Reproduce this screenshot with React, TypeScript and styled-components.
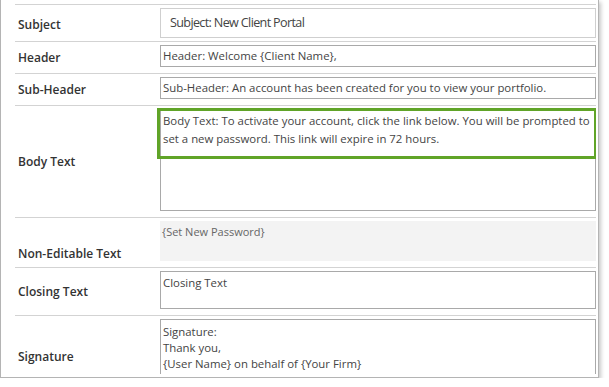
import React from 'react';
import styled, { createGlobalStyle } from 'styled-components';

// ----- global -----
const GlobalStyle = createGlobalStyle`
  html, body {
    margin: 0;
    padding: 0;
    background: #fff;
  }
  body {
    font-family: "Open Sans", "Liberation Sans", sans-serif;
  }
`;

// ----- frame -----
const Frame = styled.div`
  box-sizing: border-box;
  width: 599px;
  border: 1px solid #b4b4b4;
  border-top: none;
  padding: 0 2px 3px 14px;
  background: #fff;
  box-shadow: 2px 2px 4px rgba(0, 0, 0, 0.22);
`;

const Viewport = styled.div`
  box-sizing: border-box;
  height: 374px;
  padding-top: 4px;
  overflow: hidden;
`;

// ----- rows -----
const Row = styled.div<{ $tight?: boolean }>`
  display: grid;
  grid-template-columns: 145px 1fr;
  border-top: 1px solid #d3d3d3;
  padding: 3px 0 ${({ $tight }) => ($tight ? 3 : 6)}px;
`;

const Label = styled.div<{ $bottom?: boolean }>`
  align-self: ${({ $bottom }) => ($bottom ? 'end' : 'center')};
  padding: ${({ $bottom }) => ($bottom ? 0 : 4)}px 0 0 3px;
  font-size: 12px;
  font-weight: 600;
  line-height: ${({ $bottom }) => ($bottom ? 14 : 18)}px;
  color: #333;
`;

const Field = styled.div`
  position: relative;
`;

const Box = styled.div<{
  $height: number;
  $size?: number;
  $lineHeight?: number;
  $padTop?: number;
  $padLeft?: number;
  $light?: boolean;
}>`
  box-sizing: border-box;
  height: ${({ $height }) => $height}px;
  border: 1px solid ${({ $light }) => ($light ? '#cfcfcf' : '#a9a9a9')};
  padding: ${({ $padTop = 0 }) => $padTop}px 4px 0 ${({ $padLeft = 2 }) => $padLeft}px;
  font-size: ${({ $size = 11.4 }) => $size}px;
  line-height: ${({ $lineHeight = 16 }) => $lineHeight}px;
  color: #444;
  white-space: pre-line;
  overflow: hidden;
`;

const SubjectBox = styled(Box)`
  letter-spacing: -0.65px;
`;

const ReadOnly = styled.div`
  box-sizing: border-box;
  height: 40px;
  padding: 3px 2px 0;
  background: #f3f3f3;
  font-size: 11px;
  line-height: 16px;
  color: #666;
`;

// green callout drawn over the body field
const Highlight = styled.div`
  position: absolute;
  top: -1px;
  left: -3px;
  right: -1px;
  height: 51px;
  box-sizing: border-box;
  border: 3px solid #60a428;
  pointer-events: none;
`;

const App: React.FC = () => {
  return (
    <>
      <GlobalStyle />
      <Frame>
        <Viewport>
          <Row $tight>
            <Label>Subject</Label>
            <Field>
              <SubjectBox $height={30} $size={12.6} $lineHeight={28} $padLeft={9} $light>
                Subject: New Client Portal
              </SubjectBox>
            </Field>
          </Row>

          <Row>
            <Label>Header</Label>
            <Field>
              <Box $height={22} $lineHeight={20}>
                Header: Welcome {'{Client Name}'},
              </Box>
            </Field>
          </Row>

          <Row>
            <Label>Sub-Header</Label>
            <Field>
              <Box $height={22} $lineHeight={20}>
                Sub-Header: An account has been created for you to view your portfolio.
              </Box>
            </Field>
          </Row>

          <Row>
            <Label>Body Text</Label>
            <Field>
              <Box $height={102} $lineHeight={18} $padTop={2}>
                Body Text: To activate your account, click the link below. You will be prompted to set a
                new password. This link will expire in 72 hours.
              </Box>
              <Highlight />
            </Field>
          </Row>

          <Row>
            <Label $bottom>Non-Editable Text</Label>
            <Field>
              <ReadOnly>{'{Set New Password}'}</ReadOnly>
            </Field>
          </Row>

          <Row>
            <Label>Closing Text</Label>
            <Field>
              <Box $height={38} $padTop={3}>
                Closing Text
              </Box>
            </Field>
          </Row>

          <Row>
            <Label>Signature</Label>
            <Field>
              <Box $height={72} $padTop={4}>
                {'Signature:\nThank you,\n{User Name} on behalf of {Your Firm}'}
              </Box>
            </Field>
          </Row>
        </Viewport>
      </Frame>
    </>
  );
};

export default App;
